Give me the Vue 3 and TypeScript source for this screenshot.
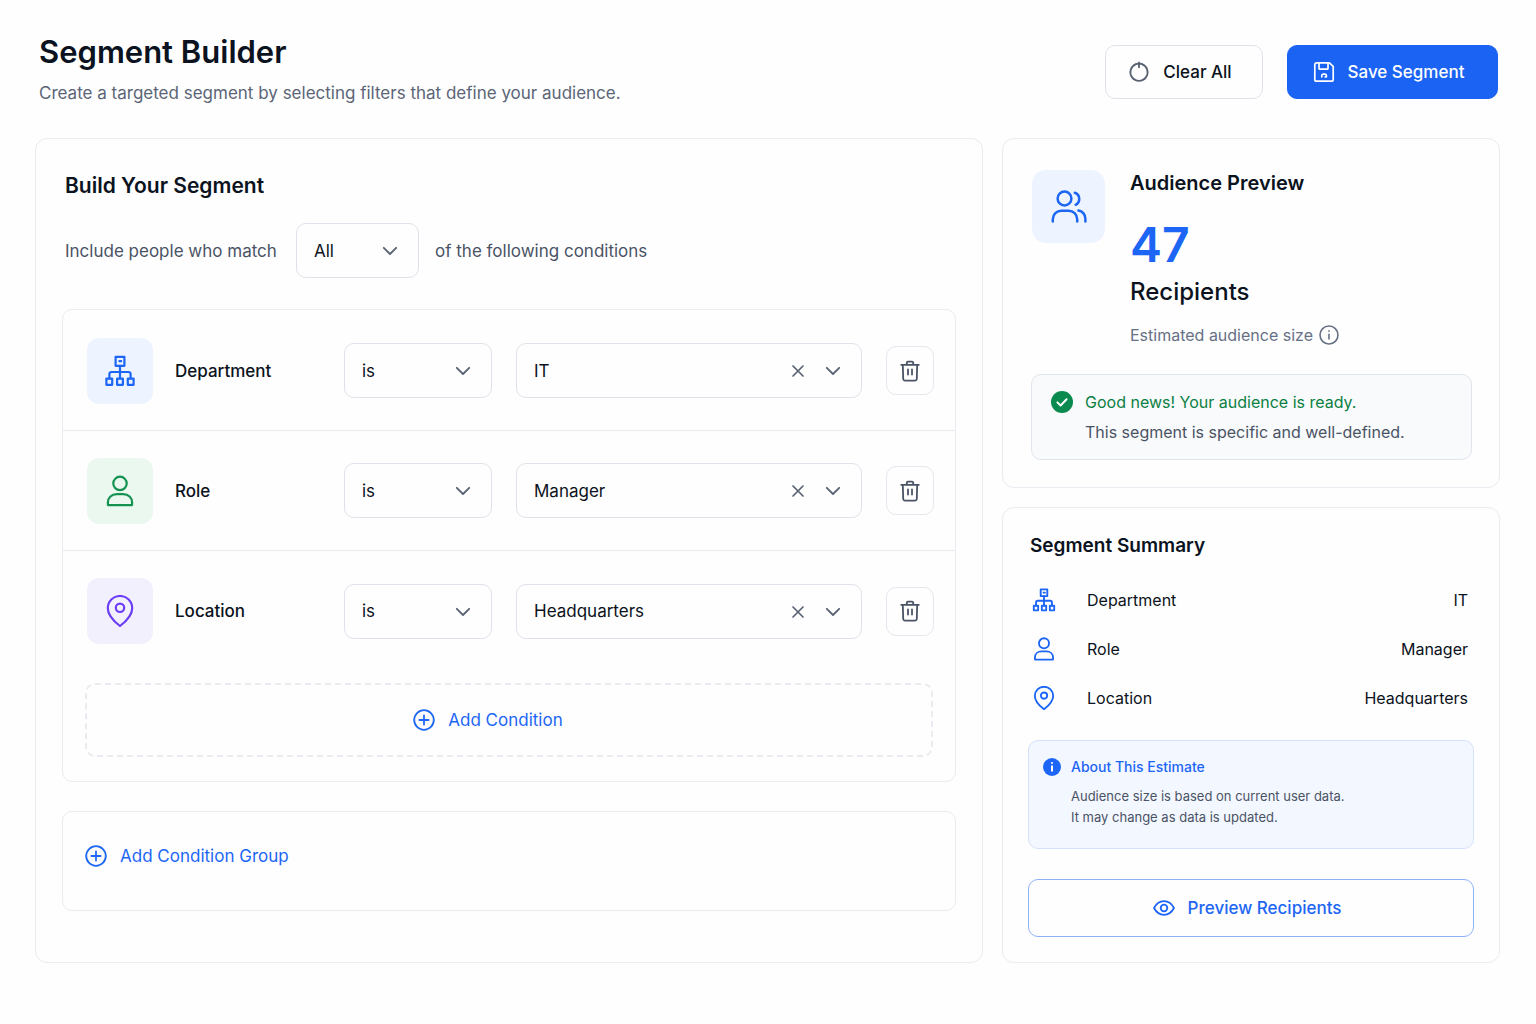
<script setup lang="ts">
import { computed, ref } from 'vue'

type IconName = 'department' | 'role' | 'location'

interface Condition {
  id: IconName
  label: string
  operator: string
  value: string
  options: string[]
}

const icons: Record<IconName, string[]> = {
  department: [
    'M11.6 1.8h8.8v9h-8.8z',
    'M15.4 6.2h1.8',
    'M16 10.8v12.6',
    'M5.4 23.4v-4.2a2.2 2.2 0 0 1 2.2-2.2h16.8a2.2 2.2 0 0 1 2.2 2.2v4.2',
    'M2.4 23.6h5.8v6.2H2.4z',
    'M13.1 23.6h5.8v6.2h-5.8z',
    'M23.8 23.6h5.8v6.2h-5.8z',
  ],
  role: [
    'M16 1.7a6.7 6.7 0 1 1 0 13.4a6.7 6.7 0 1 1 0-13.4z',
    'M3.9 29.4v-1.8c0-5 3.8-8.4 8.8-8.4h6.6c5 0 8.8 3.4 8.8 8.4v1.8a.8.8 0 0 1-.8.8H4.7a.8.8 0 0 1-.8-.8z',
  ],
  location: [
    'M16 31C10 26.4 3.8 20.4 3.8 13.2a12.2 12.2 0 0 1 24.4 0C28.2 20.4 22 26.4 16 31z',
    'M16 8.6a4.2 4.2 0 1 1 0 8.4a4.2 4.2 0 1 1 0-8.4z',
  ],
}

const matchMode = ref('All')

const conditions = ref<Condition[]>([
  { id: 'department', label: 'Department', operator: 'is', value: 'IT', options: ['IT', 'Finance', 'Marketing'] },
  { id: 'role', label: 'Role', operator: 'is', value: 'Manager', options: ['Manager', 'Director', 'Analyst'] },
  { id: 'location', label: 'Location', operator: 'is', value: 'Headquarters', options: ['Headquarters', 'Remote'] },
])

const recipients = computed(() => 47)

function removeCondition(id: IconName) {
  conditions.value = conditions.value.filter((c) => c.id !== id)
}

function clearAll() {
  conditions.value.forEach((c) => (c.value = ''))
}
</script>

<template>
  <main class="page">
    <header class="page-head">
      <div>
        <h1>Segment Builder</h1>
        <p class="subtitle">Create a targeted segment by selecting filters that define your audience.</p>
      </div>
      <div class="actions">
        <button type="button" class="btn btn-clear" @click="clearAll">
          <svg class="icon" width="22" height="22" viewBox="0 0 22 22" stroke-width="1.8">
            <path d="M8 3.2a8.6 8.6 0 1 0 6 0" />
            <path d="M8 3.2 11 2.4l3 .8M11 1.4v4.8" />
          </svg>
          Clear All
        </button>
        <button type="button" class="btn btn-save">
          <svg class="icon" width="22" height="22" viewBox="0 0 22 22" stroke-width="1.7">
            <path d="M3.6 1.8h12.8l3.8 3.6v13a1.8 1.8 0 0 1-1.8 1.8H3.6a1.8 1.8 0 0 1-1.8-1.8V3.6a1.8 1.8 0 0 1 1.8-1.8z" />
            <path d="M6 2v5.4a.8.8 0 0 0 .8.8h7.4a.8.8 0 0 0 .8-.8V2" />
            <path d="M8.8 15.8v-1.2a1.4 1.4 0 0 1 1.4-1.4h1.8a1.4 1.4 0 0 1 1.4 1.4v1.2h-1.2" />
          </svg>
          Save Segment
        </button>
      </div>
    </header>

    <div class="columns">
      <section class="card builder">
        <h2>Build Your Segment</h2>
        <div class="match">
          <label class="match-label" for="match-mode">Include people who match</label>
          <div class="field field-match">
            <select id="match-mode" v-model="matchMode">
              <option>All</option>
              <option>Any</option>
            </select>
            <svg class="icon chevron" width="16" height="10" viewBox="0 0 16 10" stroke-width="1.8"><path d="M1.8 1.8 8 8l6.2-6.2" /></svg>
          </div>
          <span>of the following conditions</span>
        </div>

        <div class="group conditions">
          <div v-for="c in conditions" :key="c.id" class="condition">
            <div class="subject">
              <span class="tile" :class="`tile-${c.id}`">
                <svg class="icon" width="32" height="32" viewBox="0 0 32 32" stroke-width="2.2">
                  <path v-for="d in icons[c.id]" :key="d" :d="d" />
                </svg>
              </span>
              <label :for="`${c.id}-value`">{{ c.label }}</label>
            </div>
            <div class="field">
              <select v-model="c.operator" :aria-label="`${c.label} operator`">
                <option>is</option>
                <option>is not</option>
              </select>
              <svg class="icon chevron" width="16" height="10" viewBox="0 0 16 10" stroke-width="1.8"><path d="M1.8 1.8 8 8l6.2-6.2" /></svg>
            </div>
            <div class="field">
              <select :id="`${c.id}-value`" v-model="c.value">
                <option v-for="o in c.options" :key="o">{{ o }}</option>
              </select>
              <button type="button" class="clear" :aria-label="`Clear ${c.label}`" @click="c.value = ''">
                <svg class="icon" width="14" height="14" viewBox="0 0 14 14" stroke-width="1.7"><path d="m2 2 10 10M12 2 2 12" /></svg>
              </button>
              <svg class="icon chevron" width="16" height="10" viewBox="0 0 16 10" stroke-width="1.8"><path d="M1.8 1.8 8 8l6.2-6.2" /></svg>
            </div>
            <button type="button" class="remove" :aria-label="`Remove ${c.label}`" @click="removeCondition(c.id)">
              <svg class="icon" width="22" height="22" viewBox="0 0 22 22" stroke-width="1.8">
                <path d="M2.2 4.8h17.6M7.8 4.8v-2a1.2 1.2 0 0 1 1.2-1.2h4a1.2 1.2 0 0 1 1.2 1.2v2" />
                <path d="M3.8 4.8l.4 14.2a1.7 1.7 0 0 0 1.7 1.6h10.2a1.7 1.7 0 0 0 1.7-1.6l.4-14.2" />
                <path d="M9 9.4v5.2M13 9.4v5.2" />
              </svg>
            </button>
          </div>
          <button type="button" class="add add-condition">
            <svg class="icon" width="22" height="22" viewBox="0 0 22 22" stroke-width="1.8">
              <circle cx="11" cy="11" r="9.8" /><path d="M11 6.4v9.2M6.4 11h9.2" />
            </svg>
            Add Condition
          </button>
        </div>

        <div class="group group-new">
          <button type="button" class="add">
            <svg class="icon" width="22" height="22" viewBox="0 0 22 22" stroke-width="1.8">
              <circle cx="11" cy="11" r="9.8" /><path d="M11 6.4v9.2M6.4 11h9.2" />
            </svg>
            Add Condition Group
          </button>
        </div>
      </section>

      <aside class="side">
        <section class="card audience">
          <div class="audience-top">
            <span class="tile tile-audience">
              <svg class="icon" width="38" height="38" viewBox="0 0 38 38" stroke-width="2.5">
                <circle cx="14.5" cy="10.5" r="6.9" />
                <path d="M2.8 33.5v-2.2a8.6 8.6 0 0 1 8.6-8.6h7.2a8.6 8.6 0 0 1 8.6 8.6v2.2" />
                <path d="M24.8 4.8a6.5 6.5 0 0 1 .8 12" />
                <path d="M28.4 22.6a8 8 0 0 1 7 8.3v2.6" />
              </svg>
            </span>
            <div>
              <h2>Audience Preview</h2>
              <p class="count">{{ recipients }}</p>
              <p class="unit">Recipients</p>
              <p class="estimate">
                Estimated audience size
                <svg class="icon" width="20" height="20" viewBox="0 0 20 20" stroke-width="1.6">
                  <circle cx="10" cy="10" r="9" /><path d="M10 9.2v4.8M10 5.9v.4" />
                </svg>
              </p>
            </div>
          </div>
          <div class="notice ready">
            <svg width="22" height="22" viewBox="0 0 22 22">
              <circle cx="11" cy="11" r="11" fill="#0b8a4f" />
              <path d="m6.4 11.4 3.2 3.1 6-6.3" fill="none" stroke="#fff" stroke-width="2" stroke-linecap="round" stroke-linejoin="round" />
            </svg>
            <div>
              <p class="ready-title">Good news! Your audience is ready.</p>
              <p class="ready-text">This segment is specific and well-defined.</p>
            </div>
          </div>
        </section>

        <section class="card summary">
          <h3>Segment Summary</h3>
          <dl>
            <div v-for="c in conditions" :key="c.id" class="summary-row">
              <dt>
                <svg class="icon" width="24" height="24" viewBox="0 0 32 32" stroke-width="2.5">
                  <path v-for="d in icons[c.id]" :key="d" :d="d" />
                </svg>
                {{ c.label }}
              </dt>
              <dd>{{ c.value }}</dd>
            </div>
          </dl>
          <div class="notice about">
            <svg width="18" height="18" viewBox="0 0 18 18">
              <circle cx="9" cy="9" r="9" fill="#1d66f5" />
              <path d="M9 7.4v6.2M9 4.2v1.6" stroke="#fff" stroke-width="2" />
            </svg>
            <div>
              <p class="about-title">About This Estimate</p>
              <p class="about-text">Audience size is based on current user data.<br />It may change as data is updated.</p>
            </div>
          </div>
          <button type="button" class="btn btn-preview">
            <svg class="icon" width="22" height="18" viewBox="0 0 22 18" stroke-width="1.8">
              <path d="M1 9c2.4-4.4 5.8-6.8 10-6.8S18.6 4.6 21 9c-2.4 4.4-5.8 6.8-10 6.8S3.4 13.4 1 9z" />
              <circle cx="11" cy="9" r="3.3" />
            </svg>
            Preview Recipients
          </button>
        </section>
      </aside>
    </div>
  </main>
</template>

<style>
body {
  margin: 0;
  background: #fefefe;
}
</style>

<style scoped>
.page {
  box-sizing: border-box;
  padding: 36px 36px 61px 35px;
  color: #0b1220;
  font-family: Inter, "Liberation Sans", sans-serif;
  font-size: 17px;
  line-height: 24px;
}

.page *,
.page *::before {
  box-sizing: border-box;
}

h1,
h2,
h3,
p,
dl,
dd {
  margin: 0;
}

button,
select {
  font: inherit;
  color: inherit;
  cursor: pointer;
}

svg {
  display: block;
  flex: none;
}

.icon {
  fill: none;
  stroke: currentColor;
  stroke-linecap: round;
  stroke-linejoin: round;
}

.page-head {
  display: flex;
  align-items: center;
  justify-content: space-between;
  gap: 24px;
  padding: 0 2px 0 4px;
  margin-bottom: 31px;
}

h1 {
  margin-bottom: 11px;
  font-size: 31px;
  font-weight: 600;
  line-height: 32px;
}

.subtitle {
  color: #5b6577;
  line-height: 28px;
}

.actions {
  display: flex;
  gap: 24px;
}

.btn {
  display: flex;
  align-items: center;
  justify-content: center;
  gap: 13px;
  height: 54px;
  padding: 0 8px 0 0;
  border: 1px solid #dfe2ea;
  border-radius: 10px;
  background: #fefefe;
  font-weight: 500;
}

.btn-clear {
  width: 158px;
}

.btn-clear .icon {
  color: #596273;
}

.btn-save {
  width: 211px;
  border-color: #1b63f2;
  background: #1b63f2;
  color: #fff;
}

.columns {
  display: grid;
  grid-template-columns: 1fr 498px;
  gap: 19px;
}

.card {
  border: 1px solid #e9ebf1;
  border-radius: 12px;
}

.builder {
  padding: 33px 26px 51px;
}

h2 {
  font-size: 21px;
  font-weight: 600;
  line-height: 28px;
}

.builder h2 {
  padding: 0 3px;
  margin-bottom: 23px;
}

.match {
  display: flex;
  align-items: center;
  gap: 16px;
  padding: 0 3px;
  margin-bottom: 31px;
  color: #4a5365;
}

.match-label {
  min-width: 215px;
}

.field {
  position: relative;
}

.field-match {
  width: 123px;
}

.field select {
  display: block;
  width: 100%;
  height: 55px;
  padding: 0 48px 0 17px;
  border: 1px solid #dfe2ea;
  border-radius: 10px;
  background: #fefefe;
  color: #0b1220;
  appearance: none;
}

.chevron {
  position: absolute;
  top: 23px;
  right: 21px;
  color: #596273;
  pointer-events: none;
}

.clear {
  position: absolute;
  top: 18px;
  right: 54px;
  padding: 3px;
  border: 0;
  background: none;
  color: #596273;
}

.group {
  border: 1px solid #e9ebf1;
  border-radius: 10px;
}

.conditions {
  padding-top: 1px;
}

.condition {
  display: grid;
  grid-template-columns: 233px 148px 1fr 48px;
  align-items: center;
  column-gap: 24px;
  height: 120px;
  padding: 0 21px 0 24px;
  border-bottom: 1px solid #e9ebf1;
}

.condition:nth-last-child(2) {
  border-bottom: 0;
}

.subject {
  display: flex;
  align-items: center;
  gap: 22px;
  font-weight: 500;
}

.tile {
  display: flex;
  flex: none;
  align-items: center;
  justify-content: center;
  width: 66px;
  height: 66px;
  border-radius: 12px;
}

.tile-department {
  background: #eef4ff;
  color: #1d66f5;
}

.tile-role {
  background: #ebf8f0;
  color: #149350;
}

.tile-location {
  background: #f3f0fe;
  color: #6b3df5;
}

.remove {
  display: flex;
  align-items: center;
  justify-content: center;
  width: 48px;
  height: 49px;
  padding: 0;
  border: 1px solid #e4e7ee;
  border-radius: 10px;
  background: none;
  color: #4a5365;
}

.add {
  display: flex;
  align-items: center;
  gap: 13px;
  padding: 0;
  border: 0;
  background: none;
  color: #1d66f5;
}

.add-condition {
  justify-content: center;
  width: calc(100% - 44px);
  height: 74px;
  padding-right: 42px;
  margin: 12px 22px 24px;
  border: 2px dashed #e9ebf0;
  border-radius: 10px;
}

.group-new {
  height: 100px;
  padding: 32px 22px;
  margin-top: 29px;
}

.side {
  display: flex;
  flex-direction: column;
  gap: 19px;
}

.audience {
  padding: 30px 27px 27px 28px;
}

.audience h2 {
  font-size: 20px;
}

.audience-top {
  display: flex;
  align-items: flex-start;
  gap: 25px;
  padding-left: 1px;
  margin-bottom: 27px;
}

.tile-audience {
  width: 73px;
  height: 73px;
  margin-top: 1px;
  border-radius: 14px;
  background: #eef4ff;
  color: #1d66f5;
}

.count {
  margin-top: 24px;
  color: #1d66f5;
  font-size: 48px;
  font-weight: 600;
  line-height: 48px;
}

.unit {
  margin-top: 9px;
  font-size: 24px;
  font-weight: 500;
  line-height: 28px;
}

.estimate {
  display: flex;
  align-items: center;
  gap: 6px;
  margin-top: 17px;
  color: #667085;
  font-size: 16px;
}

.notice {
  display: flex;
  border: 1px solid #e0e5ee;
  border-radius: 10px;
}

.ready {
  gap: 12px;
  padding: 15px 19px;
  background: #f8fafb;
  font-size: 16px;
}

.ready svg {
  margin-top: 1px;
}

.ready-title {
  color: #0b8043;
}

.ready-text {
  margin-top: 6px;
  color: #4a5365;
}

.summary {
  flex: 1;
  padding: 26px 25px 25px;
}

h3 {
  padding-left: 2px;
  margin-bottom: 17px;
  font-size: 19px;
  font-weight: 600;
  line-height: 24px;
}

.summary-row {
  display: flex;
  align-items: center;
  justify-content: space-between;
  height: 49px;
  padding: 0 6px 0 4px;
  font-size: 16px;
}

dt {
  display: flex;
  align-items: center;
  gap: 31px;
}

dt .icon {
  color: #1d66f5;
}

.about {
  gap: 10px;
  padding: 14px 14px 20px;
  margin-top: 18px;
  border-color: #d5e2fb;
  background: #f3f7ff;
}

.about svg {
  margin-top: 3px;
}

.about-title {
  color: #1d66f5;
  font-size: 14px;
  font-weight: 500;
}

.about-text {
  margin-top: 7px;
  color: #4a5365;
  font-size: 13px;
  line-height: 21px;
}

.btn-preview {
  width: 100%;
  height: 58px;
  margin-top: 30px;
  border-color: #8db1f9;
  background: none;
  color: #1d66f5;
}
</style>
